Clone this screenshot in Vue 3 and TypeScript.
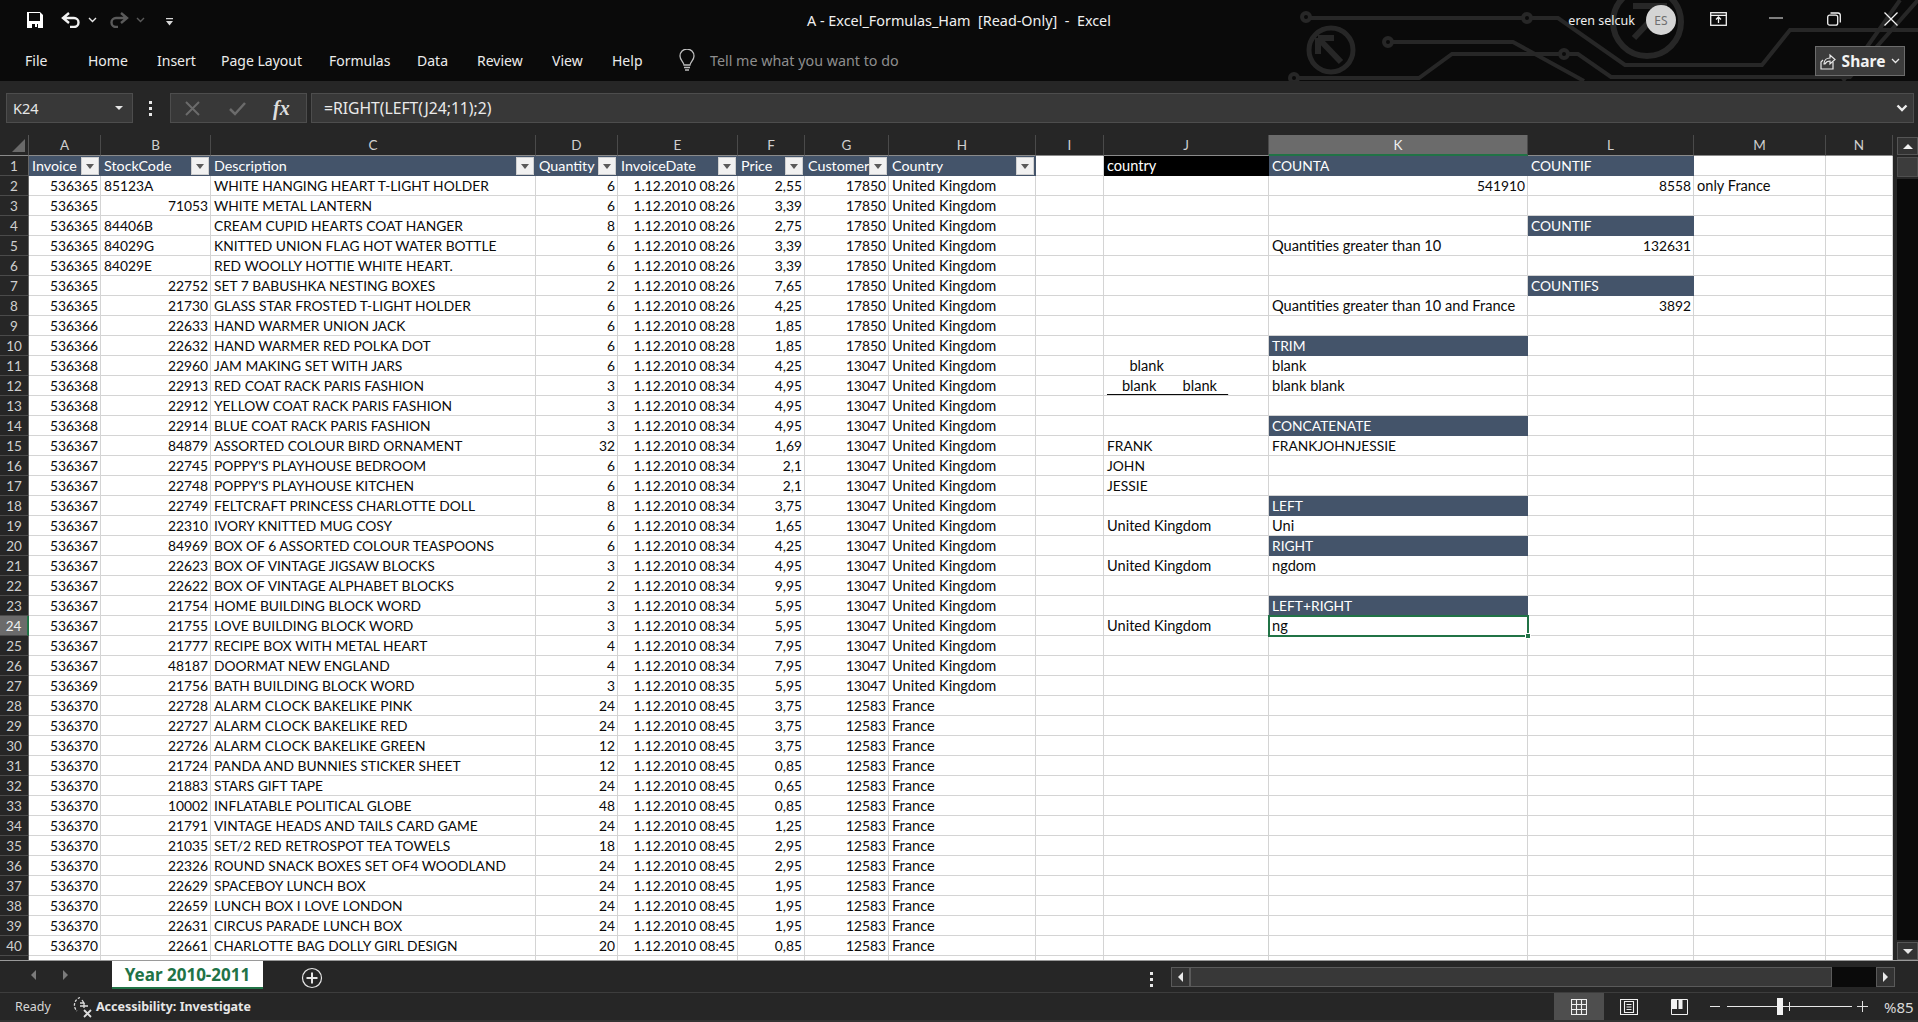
<script setup lang="ts">
interface SideCell {
  t: string
  c?: string
}

const columns = [
  { id: 'A', w: 72 },
  { id: 'B', w: 110 },
  { id: 'C', w: 325 },
  { id: 'D', w: 82 },
  { id: 'E', w: 120 },
  { id: 'F', w: 67 },
  { id: 'G', w: 84 },
  { id: 'H', w: 147 },
  { id: 'I', w: 68 },
  { id: 'J', w: 165 },
  { id: 'K', w: 259 },
  { id: 'L', w: 166 },
  { id: 'M', w: 132 },
  { id: 'N', w: 67 }
]

const gridTemplate = '29px ' + columns.map((c) => c.w + 'px').join(' ')

const tabs = [
  { t: 'File', w: 63 },
  { t: 'Home', w: 69 },
  { t: 'Insert', w: 64 },
  { t: 'Page Layout', w: 108 },
  { t: 'Formulas', w: 88 },
  { t: 'Data', w: 60 },
  { t: 'Review', w: 75 },
  { t: 'View', w: 60 },
  { t: 'Help', w: 74 }
]

const filterHeads = ['Invoice', 'StockCode', 'Description', 'Quantity', 'InvoiceDate', 'Price', 'CustomerID', 'Country']

// invoice | code | description | qty | time | price | customer | country
const raw = [
  '536365|85123A|WHITE HANGING HEART T-LIGHT HOLDER|6|08:26|2,55|17850|United Kingdom',
  '536365|71053|WHITE METAL LANTERN|6|08:26|3,39|17850|United Kingdom',
  '536365|84406B|CREAM CUPID HEARTS COAT HANGER|8|08:26|2,75|17850|United Kingdom',
  '536365|84029G|KNITTED UNION FLAG HOT WATER BOTTLE|6|08:26|3,39|17850|United Kingdom',
  '536365|84029E|RED WOOLLY HOTTIE WHITE HEART.|6|08:26|3,39|17850|United Kingdom',
  '536365|22752|SET 7 BABUSHKA NESTING BOXES|2|08:26|7,65|17850|United Kingdom',
  '536365|21730|GLASS STAR FROSTED T-LIGHT HOLDER|6|08:26|4,25|17850|United Kingdom',
  '536366|22633|HAND WARMER UNION JACK|6|08:28|1,85|17850|United Kingdom',
  '536366|22632|HAND WARMER RED POLKA DOT|6|08:28|1,85|17850|United Kingdom',
  '536368|22960|JAM MAKING SET WITH JARS|6|08:34|4,25|13047|United Kingdom',
  '536368|22913|RED COAT RACK PARIS FASHION|3|08:34|4,95|13047|United Kingdom',
  '536368|22912|YELLOW COAT RACK PARIS FASHION|3|08:34|4,95|13047|United Kingdom',
  '536368|22914|BLUE COAT RACK PARIS FASHION|3|08:34|4,95|13047|United Kingdom',
  '536367|84879|ASSORTED COLOUR BIRD ORNAMENT|32|08:34|1,69|13047|United Kingdom',
  "536367|22745|POPPY'S PLAYHOUSE BEDROOM|6|08:34|2,1|13047|United Kingdom",
  "536367|22748|POPPY'S PLAYHOUSE KITCHEN|6|08:34|2,1|13047|United Kingdom",
  '536367|22749|FELTCRAFT PRINCESS CHARLOTTE DOLL|8|08:34|3,75|13047|United Kingdom',
  '536367|22310|IVORY KNITTED MUG COSY|6|08:34|1,65|13047|United Kingdom',
  '536367|84969|BOX OF 6 ASSORTED COLOUR TEASPOONS|6|08:34|4,25|13047|United Kingdom',
  '536367|22623|BOX OF VINTAGE JIGSAW BLOCKS|3|08:34|4,95|13047|United Kingdom',
  '536367|22622|BOX OF VINTAGE ALPHABET BLOCKS|2|08:34|9,95|13047|United Kingdom',
  '536367|21754|HOME BUILDING BLOCK WORD|3|08:34|5,95|13047|United Kingdom',
  '536367|21755|LOVE BUILDING BLOCK WORD|3|08:34|5,95|13047|United Kingdom',
  '536367|21777|RECIPE BOX WITH METAL HEART|4|08:34|7,95|13047|United Kingdom',
  '536367|48187|DOORMAT NEW ENGLAND|4|08:34|7,95|13047|United Kingdom',
  '536369|21756|BATH BUILDING BLOCK WORD|3|08:35|5,95|13047|United Kingdom',
  '536370|22728|ALARM CLOCK BAKELIKE PINK|24|08:45|3,75|12583|France',
  '536370|22727|ALARM CLOCK BAKELIKE RED|24|08:45|3,75|12583|France',
  '536370|22726|ALARM CLOCK BAKELIKE GREEN|12|08:45|3,75|12583|France',
  '536370|21724|PANDA AND BUNNIES STICKER SHEET|12|08:45|0,85|12583|France',
  '536370|21883|STARS GIFT TAPE|24|08:45|0,65|12583|France',
  '536370|10002|INFLATABLE POLITICAL GLOBE|48|08:45|0,85|12583|France',
  '536370|21791|VINTAGE HEADS AND TAILS CARD GAME|24|08:45|1,25|12583|France',
  '536370|21035|SET/2 RED RETROSPOT TEA TOWELS|18|08:45|2,95|12583|France',
  '536370|22326|ROUND SNACK BOXES SET OF4 WOODLAND|24|08:45|2,95|12583|France',
  '536370|22629|SPACEBOY LUNCH BOX|24|08:45|1,95|12583|France',
  '536370|22659|LUNCH BOX I LOVE LONDON|24|08:45|1,95|12583|France',
  '536370|22631|CIRCUS PARADE LUNCH BOX|24|08:45|1,95|12583|France',
  '536370|22661|CHARLOTTE BAG DOLLY GIRL DESIGN|20|08:45|0,85|12583|France'
]

const side: Record<string, SideCell> = {
  J1: { t: 'country', c: 'black' },
  K1: { t: 'COUNTA', c: 'head' },
  L1: { t: 'COUNTIF', c: 'head' },
  K2: { t: '541910', c: 'num' },
  L2: { t: '8558', c: 'num' },
  M2: { t: 'only France' },
  L4: { t: 'COUNTIF', c: 'head' },
  K5: { t: 'Quantities greater than 10' },
  L5: { t: '132631', c: 'num' },
  L7: { t: 'COUNTIFS', c: 'head' },
  K8: { t: 'Quantities greater than 10 and France' },
  L8: { t: '3892', c: 'num' },
  K10: { t: 'TRIM', c: 'head' },
  J11: { t: '      blank', c: 'pre' },
  K11: { t: 'blank' },
  J12: { t: '    blank       blank   ', c: 'pre under' },
  K12: { t: 'blank blank' },
  K14: { t: 'CONCATENATE', c: 'head' },
  J15: { t: 'FRANK' },
  K15: { t: 'FRANKJOHNJESSIE' },
  J16: { t: 'JOHN' },
  J17: { t: 'JESSIE' },
  K18: { t: 'LEFT', c: 'head' },
  J19: { t: 'United Kingdom' },
  K19: { t: 'Uni' },
  K20: { t: 'RIGHT', c: 'head' },
  J21: { t: 'United Kingdom' },
  K21: { t: 'ngdom' },
  K23: { t: 'LEFT+RIGHT', c: 'head' },
  J24: { t: 'United Kingdom' },
  K24: { t: 'ng', c: 'selected' }
}

const dataCols = ['A', 'B', 'C', 'D', 'E', 'F', 'G', 'H']

const cellFor = (col: string, row: number): SideCell => {
  if (side[col + row]) return side[col + row]
  const line = raw[row - 2]
  const i = dataCols.indexOf(col)
  if (!line || i < 0) return { t: '' }
  const parts = line.split('|')
  if (col === 'E') return { t: '1.12.2010 ' + parts[4], c: 'num' }
  const isNum = col === 'A' || col === 'D' || col === 'F' || col === 'G' || (col === 'B' && /^\d+$/.test(parts[1]))
  return { t: parts[i], c: isNum ? 'num' : '' }
}

// Lato runs narrower than Calibri on lower case, so mixed case text gets a larger size
const cellClass = (col: string, row: number) => {
  const cell = cellFor(col, row)
  return [cell.c, /[a-z]/.test(cell.t) ? 'wide' : '']
}

const rowNumbers = Array.from({ length: 40 }, (_, i) => i + 2)
</script>

<template>
  <div class="app">
    <header class="top">
      <svg class="circuit" width="648" height="81" viewBox="1270 0 648 81" fill="none" stroke="#272727" stroke-width="4">
        <circle cx="1306" cy="17" r="4" />
        <path d="M1310 18H1523M1531 18H1558L1625 65H1762L1790 30H1918" />
        <circle cx="1527" cy="18" r="4" />
        <circle cx="1388" cy="42" r="4" />
        <path d="M1392 42H1513L1584 81" />
        <circle cx="1294" cy="78" r="4" />
        <path d="M1298 78H1419L1452 54H1560M1568 54H1578L1611 77H1850L1918 0M1843 81L1900 0" />
        <circle cx="1564" cy="54" r="4" />
        <circle cx="1331" cy="50" r="22" stroke-width="5" />
        <path d="M1318 38H1334M1318 38V54M1318 38L1341 62" stroke-width="6" />
        <circle cx="1647" cy="22" r="34" stroke-width="6" />
        <path d="M1633 6H1664V34M1664 6L1634 38" stroke-width="6" />
      </svg>

      <div class="title-bar">
        <div class="qat">
          <svg class="save" width="16" height="16" viewBox="0 0 16 16">
            <path d="M0 0H13L16 3V16H0Z" fill="#fff" />
            <path d="M2 1H13V9H2Z" fill="#0a0a0a" />
            <path d="M5 12H11V16H5Z" fill="#0a0a0a" />
            <path d="M8 12H10V15H8Z" fill="#fff" />
          </svg>
          <svg class="undo" width="20" height="16" viewBox="0 0 20 16" fill="none" stroke="#f2f2f2" stroke-width="2.4">
            <path d="M8 1L2 6L8 11M2 6H13A4.5 4.5 0 0 1 13 15H9" />
          </svg>
          <svg class="chev" width="9" height="6" viewBox="0 0 9 6" fill="none" stroke="#e6e6e6" stroke-width="1.4"><path d="M1 1L4.500 4.500L8 1" /></svg>
          <svg class="redo" width="20" height="16" viewBox="0 0 20 16" fill="none" stroke="#5a5a5a" stroke-width="2.4">
            <path d="M12 1L18 6L12 11M18 6H7A4.500 4.500 0 0 0 7 15H9" />
          </svg>
          <svg class="chev dim" width="9" height="6" viewBox="0 0 9 6" fill="none" stroke="#5a5a5a" stroke-width="1.4"><path d="M1 1L4.500 4.500L8 1" /></svg>
          <svg class="custom" width="7" height="8" viewBox="0 0 7 8"><path d="M0 0H7V1.200H0ZM0 3H7L3.500 7.500Z" fill="#d8d8d8" /></svg>
        </div>
        <div class="doc-title">A - Excel_Formulas_Ham&nbsp; [Read-Only]&nbsp; -&nbsp; Excel</div>
        <div class="win-side">
          <span class="user">eren selcuk</span>
          <span class="avatar">ES</span>
          <svg class="win-ribbon" width="17" height="14" viewBox="0 0 17 14" fill="none" stroke="#f2f2f2" stroke-width="1.300">
            <rect x="0.700" y="0.700" width="15.600" height="12.600" />
            <path d="M0.700 3.300H16.300M8.500 11V5.500M6 7.500L8.500 5L11 7.500" />
          </svg>
          <svg class="win-min" width="14" height="2" viewBox="0 0 14 2"><path d="M0 0.500H14V1.500H0Z" fill="#f2f2f2" /></svg>
          <svg class="win-max" width="14" height="14" viewBox="0 0 14 14" fill="none" stroke="#f2f2f2" stroke-width="1.300">
            <rect x="0.700" y="3.200" width="10" height="10" rx="2" />
            <path d="M3.500 1H11A2.500 2.500 0 0 1 13.300 3.500V10.500" />
          </svg>
          <svg class="win-close" width="14" height="14" viewBox="0 0 14 14" stroke="#f2f2f2" stroke-width="1.300"><path d="M0.500 0.500L13.500 13.500M13.500 0.500L0.500 13.500" /></svg>
        </div>
      </div>

      <div class="menu-bar">
        <nav class="tabs">
          <span v-for="tab in tabs" :key="tab.t" class="tab" :style="{ width: tab.w + 'px' }">{{ tab.t }}</span>
        </nav>
        <svg class="bulb" width="16" height="23" viewBox="0 0 16 23" fill="none" stroke="#bdbdbd" stroke-width="1.300">
          <path d="M5 16C4.500 12.500 1 11 1 7A7 7 0 0 1 15 7C15 11 11.500 12.500 11 16Z" />
          <path d="M5 18.500H11M6 21H10" />
        </svg>
        <span class="tell">Tell me what you want to do</span>
        <button class="share">
          <svg width="16" height="18" viewBox="0 0 16 18" fill="none" stroke="#e8e8e8" stroke-width="1.200">
            <path d="M3 8L1 10V17H13V10" />
            <path d="M4 12C4 8 7 6 10 6V3L15 7.500L10 12V9C8 9 6 10 5 12Z" />
          </svg>
          <span>Share</span>
          <svg width="9" height="6" viewBox="0 0 9 6" fill="none" stroke="#e8e8e8" stroke-width="1.300"><path d="M1 1L4.500 4.500L8 1" /></svg>
        </button>
      </div>
    </header>

    <section class="formula-row">
      <div class="name-box">
        <span>K24</span>
        <i class="tri-down"></i>
      </div>
      <div class="vdots"><i></i><i></i><i></i></div>
      <div class="fx-buttons">
        <svg width="15" height="15" viewBox="0 0 15 15" stroke="#6b6b6b" stroke-width="2" fill="none"><path d="M1 1L14 14M14 1L1 14" /></svg>
        <svg width="17" height="15" viewBox="0 0 17 15" stroke="#6b6b6b" stroke-width="2.500" fill="none"><path d="M1 8L6 13L16 2" /></svg>
        <span class="fx">fx</span>
      </div>
      <div class="formula-input">
        <span>=RIGHT(LEFT(J24;11);2)</span>
        <svg width="12" height="8" viewBox="0 0 12 8" fill="none" stroke="#ededed" stroke-width="2.400"><path d="M1.500 1.500L6 6L10.500 1.500" /></svg>
      </div>
    </section>

    <section class="sheet-row">
      <div class="grid" :style="{ gridTemplateColumns: gridTemplate }">
        <div class="corner"><i></i></div>
        <div v-for="col in columns" :key="col.id" class="col-head" :class="{ active: col.id === 'K' }">{{ col.id }}</div>

        <div class="row-head">1</div>
        <template v-for="col in columns" :key="col.id + '1'">
          <div v-if="dataCols.includes(col.id)" class="cell head filter">
            <span class="clip">{{ filterHeads[dataCols.indexOf(col.id)] }}</span>
            <i class="filter-btn"></i>
          </div>
          <div v-else class="cell" :class="cellClass(col.id, 1)">{{ cellFor(col.id, 1).t }}</div>
        </template>

        <template v-for="row in rowNumbers" :key="row">
          <div class="row-head" :class="{ active: row === 24 }">{{ row }}</div>
          <div
            v-for="col in columns"
            :key="col.id + row"
            class="cell"
            :class="cellClass(col.id, row)"
          >{{ cellFor(col.id, row).t }}</div>
        </template>
      </div>

      <aside class="v-scroll">
        <button class="sb-btn"><i class="tri-up"></i></button>
        <div class="v-thumb"></div>
        <div class="v-track"></div>
        <button class="sb-btn"><i class="tri-down big"></i></button>
      </aside>
    </section>

    <section class="sheet-tabs">
      <div class="nav-arrows">
        <i class="tri-left"></i>
        <i class="tri-right"></i>
      </div>
      <div class="sheet-tab">Year 2010-2011</div>
      <svg class="add" width="22" height="22" viewBox="0 0 22 22" fill="none" stroke="#e6e6e6">
        <circle cx="11" cy="11" r="9.500" stroke-width="1.200" />
        <path d="M11 5.500V16.500M5.500 11H16.500" stroke-width="2" />
      </svg>
      <div class="sheet-dots"><i></i><i></i><i></i></div>
      <div class="h-scroll">
        <button class="hs-btn"><i class="tri-left lit"></i></button>
        <div class="h-thumb"></div>
        <div class="h-track"></div>
        <button class="hs-btn"><i class="tri-right lit"></i></button>
      </div>
    </section>

    <footer class="status">
      <span class="ready">Ready</span>
      <svg class="acc" width="20" height="22" viewBox="0 0 20 22" fill="none" stroke="#dcdcdc" stroke-width="1.300">
        <path d="M7 1.500A8 8 0 0 0 4 15" stroke-dasharray="2.500 1.500" />
        <path d="M9 4L11 7H7M11 7V12M7 10H15" />
        <path d="M11 14L18 21M18 14L11 21" stroke-width="1.800" />
      </svg>
      <span class="acc-text">Accessibility: Investigate</span>
      <div class="views">
        <button class="view on">
          <svg width="16" height="16" viewBox="0 0 16 16" fill="none" stroke="#f0f0f0" stroke-width="1.100">
            <path d="M0.500 0.500H15.500V15.500H0.500ZM5.500 0.500V15.500M10.500 0.500V15.500M0.500 5.500H15.500M0.500 10.500H15.500" />
          </svg>
        </button>
        <button class="view">
          <svg width="18" height="16" viewBox="0 0 18 16" fill="none" stroke="#f0f0f0" stroke-width="1.100">
            <path d="M0.500 0.500H17.500V15.500H0.500Z" />
            <path d="M4.500 2.500H13.500V13.500H4.500ZM6.500 5.500H11.500M6.500 8H11.500M6.500 10.500H11.500" />
          </svg>
        </button>
        <button class="view">
          <svg width="17" height="16" viewBox="0 0 17 16">
            <path d="M0.500 0.500H16.500V15.500H0.500Z" fill="none" stroke="#f0f0f0" />
            <path d="M1 1H6V10H1ZM7.500 1H11.500V10H7.500Z" fill="#f0f0f0" />
          </svg>
        </button>
      </div>
      <div class="zoom-ctl">
        <i class="z-minus"></i>
        <div class="slider">
          <i class="thumb"></i>
          <i class="mid"></i>
        </div>
        <svg width="11" height="11" viewBox="0 0 11 11" stroke="#e0e0e0" stroke-width="1"><path d="M5.500 0V11M0 5.500H11" /></svg>
        <span class="pct">%85</span>
      </div>
    </footer>
  </div>
</template>

<style>
html,
body {
  margin: 0;
  background: #0a0a0a;
}
</style>

<style scoped>
.app {
  width: 1918px;
  height: 1022px;
  display: flex;
  flex-direction: column;
  overflow: hidden;
  background: #262626;
  font-family: 'Noto Sans', sans-serif;
  color: #f0f0f0;
}

button {
  font: inherit;
  color: inherit;
  border: none;
  padding: 0;
  background: none;
}

/* title area */
.top {
  position: relative;
  height: 81px;
  flex: none;
  background: #0a0a0a;
}

.circuit {
  position: absolute;
  top: 0;
  right: 0;
}

.title-bar {
  position: relative;
  height: 40px;
  display: grid;
  grid-template-columns: 1fr auto 1fr;
  align-items: center;
}

.qat {
  display: flex;
  align-items: center;
  padding-left: 27px;
}

.undo {
  margin-left: 18px;
}

.qat .chev {
  margin-left: 7px;
}

.redo {
  margin-left: 12px;
}

.custom {
  margin-left: 21px;
  margin-top: 3px;
}

.doc-title {
  font-size: 14.4px;
  color: #f0f0f0;
  white-space: nowrap;
}

.win-side {
  display: flex;
  align-items: center;
  justify-content: flex-end;
}

.user {
  font-size: 12.5px;
  margin-right: 11px;
  color: #eee;
}

.avatar {
  width: 30px;
  height: 30px;
  border-radius: 50%;
  background: #d4d4d4;
  color: #6f6f6f;
  font-size: 12px;
  display: flex;
  align-items: center;
  justify-content: center;
}

.win-ribbon {
  margin-left: 34px;
  margin-top: -3px;
}

.win-min {
  margin-left: 42px;
  margin-top: -4px;
}

.win-max {
  margin-left: 44px;
  margin-top: -3px;
}

.win-close {
  margin-left: 43px;
  margin-right: 20px;
  margin-top: -3px;
}

.menu-bar {
  position: relative;
  height: 41px;
  display: flex;
  align-items: center;
}

.tabs {
  display: flex;
  padding-left: 25px;
}

.tab {
  font-size: 14px;
  color: #ececec;
  white-space: nowrap;
}

.bulb {
  margin-left: -7px;
}

.tell {
  margin-left: 15px;
  font-size: 14.3px;
  color: #8e8e8e;
  white-space: nowrap;
}

.share {
  margin-left: auto;
  margin-right: 13px;
  width: 90px;
  height: 30px;
  box-sizing: border-box;
  background: #3c3c3c;
  border: 1px solid #6c6c6c;
  display: flex;
  align-items: center;
  justify-content: center;
  gap: 6px;
  font-size: 15.5px;
  font-weight: 700;
  color: #f2f2f2;
}

/* formula bar */
.formula-row {
  height: 54px;
  flex: none;
  display: flex;
  align-items: center;
  padding: 0 4px 0 6px;
  box-sizing: border-box;
  background: #262626;
}

.name-box {
  width: 127px;
  height: 30px;
  box-sizing: border-box;
  display: flex;
  align-items: center;
  justify-content: space-between;
  padding: 0 9px 0 6px;
  background: #383838;
  border: 1px solid #4d4d4d;
  font-size: 14.5px;
  color: #e6e6e6;
}

.tri-down {
  display: block;
  width: 0;
  height: 0;
  border-left: 4px solid transparent;
  border-right: 4px solid transparent;
  border-top: 4px solid #e6e6e6;
}

.tri-down.big {
  border-left-width: 5px;
  border-right-width: 5px;
  border-top-width: 5px;
}

.vdots,
.sheet-dots {
  display: flex;
  flex-direction: column;
  gap: 3px;
}

.vdots {
  margin-left: 16px;
}

.vdots i,
.sheet-dots i {
  width: 3px;
  height: 3px;
  background: #e8e8e8;
}

.fx-buttons {
  margin-left: 18px;
  width: 137px;
  height: 30px;
  box-sizing: border-box;
  display: flex;
  align-items: center;
  padding-left: 14px;
  gap: 29px;
  background: #383838;
  border: 1px solid #4d4d4d;
}

.fx {
  font-family: 'Liberation Serif', serif;
  font-style: italic;
  font-weight: 700;
  font-size: 20px;
  color: #dedede;
  margin-left: -2px;
}

.formula-input {
  margin-left: 4px;
  flex: 1;
  height: 30px;
  box-sizing: border-box;
  display: flex;
  align-items: center;
  justify-content: space-between;
  padding: 0 5px 0 12px;
  background: #383838;
  border: 1px solid #4d4d4d;
  font-size: 15.7px;
  color: #eaeaea;
}

/* sheet */
.sheet-row {
  height: 826px;
  flex: none;
  display: flex;
  border-bottom: 1px solid #9a9a9a;
  box-sizing: border-box;
}

.grid {
  width: 1893px;
  height: 825px;
  overflow: hidden;
  display: grid;
  grid-auto-rows: 20px;
  grid-template-rows: 21px;
  background: #fff;
  font-family: Lato, sans-serif;
  font-size: 13.8px;
  color: #0a0a0a;
}

.corner,
.col-head,
.row-head {
  background: #262626;
  color: #cfcfcf;
  box-sizing: border-box;
  display: flex;
  align-items: center;
  justify-content: center;
}

.corner {
  position: relative;
  border-right: 1px solid #555;
  border-bottom: 1px solid #8a8a8a;
}

.corner i {
  position: absolute;
  right: 3px;
  bottom: 3px;
  width: 0;
  height: 0;
  border-left: 13px solid transparent;
  border-bottom: 13px solid #6a6a6a;
}

.col-head {
  border-right: 1px solid #4a4a4a;
  border-bottom: 1px solid #8a8a8a;
  font-size: 13.5px;
}

.col-head.active {
  background: #6b6b6b;
  color: #efefef;
  border-bottom: 2px solid #217346;
}

.row-head {
  border-right: 1px solid #666;
  border-bottom: 1px solid #4a4a4a;
  font-size: 13.5px;
}

.row-head.active {
  background: #6b6b6b;
  color: #efefef;
  border-right: 2px solid #217346;
}

.cell {
  position: relative;
  box-sizing: border-box;
  min-width: 0;
  line-height: 20px;
  padding: 0 2px 0 3px;
  white-space: nowrap;
  overflow: hidden;
  border-right: 1px solid #d4d4d4;
  border-bottom: 1px solid #d4d4d4;
}

.cell.wide {
  font-size: 14.6px;
}

.cell.num {
  text-align: right;
}

.cell.head {
  background: #44546a;
  color: #fff;
  border-right-color: #44546a;
  border-bottom-color: #44546a;
}

.cell.black {
  background: #000;
  color: #fff;
  border-color: #000;
}

.cell.pre {
  white-space: pre;
}

.cell.under {
  text-decoration: underline;
  text-underline-offset: 3px;
}

.cell.selected {
  overflow: visible;
  outline: 2px solid #217346;
  outline-offset: -1px;
  z-index: 2;
}

.cell.selected::after {
  content: '';
  position: absolute;
  right: -4px;
  bottom: -4px;
  width: 6px;
  height: 6px;
  background: #217346;
  border: 1px solid #fff;
  box-sizing: border-box;
}

.cell.filter {
  display: flex;
  align-items: center;
  padding-right: 1px;
  font-size: 14.3px;
}

.clip {
  flex: 1;
  min-width: 0;
  overflow: hidden;
}

.filter-btn {
  flex: none;
  position: relative;
  width: 18px;
  height: 18px;
  box-sizing: border-box;
  background: #f1f1f1;
  border: 1px solid #cfcfcf;
}

.filter-btn::after {
  content: '';
  position: absolute;
  left: 4px;
  top: 6px;
  border-left: 4px solid transparent;
  border-right: 4px solid transparent;
  border-top: 5px solid #5a5a5a;
}

.v-scroll {
  flex: 1;
  display: flex;
  flex-direction: column;
  gap: 2px;
  padding: 2px 0 0 4px;
  box-sizing: border-box;
  background: #262626;
}

.sb-btn {
  flex: none;
  height: 18px;
  box-sizing: border-box;
  background: #333;
  border: 1px solid #555;
  display: flex;
  align-items: center;
  justify-content: center;
}

.tri-up {
  display: block;
  border-left: 5px solid transparent;
  border-right: 5px solid transparent;
  border-bottom: 5px solid #f0f0f0;
}

.v-thumb {
  flex: none;
  height: 20px;
  background: #3c3c3c;
  border: 1px solid #4f4f4f;
  box-sizing: border-box;
}

.v-track {
  flex: 1;
  background: #0a0a0a;
}

/* sheet tabs */
.sheet-tabs {
  height: 32px;
  flex: none;
  display: flex;
  box-sizing: border-box;
  border-bottom: 1px solid #3d3d3d;
  background: #262626;
}

.nav-arrows {
  width: 112px;
  box-sizing: border-box;
  padding: 0 0 4px 31px;
  display: flex;
  align-items: center;
  gap: 27px;
}

.tri-left {
  display: block;
  border-top: 5px solid transparent;
  border-bottom: 5px solid transparent;
  border-right: 5px solid #7b7b7b;
}

.tri-right {
  display: block;
  border-top: 5px solid transparent;
  border-bottom: 5px solid transparent;
  border-left: 5px solid #7b7b7b;
}

.tri-left.lit {
  border-right-color: #eaeaea;
}

.tri-right.lit {
  border-left-color: #eaeaea;
}

.sheet-tab {
  width: 151px;
  height: 28px;
  box-sizing: border-box;
  background: #fff;
  border-bottom: 2px solid #217346;
  color: #217346;
  font-weight: 700;
  font-size: 17px;
  display: flex;
  align-items: center;
  justify-content: center;
  font-family: 'Noto Sans', sans-serif;
}

.add {
  margin: 6px 0 0 38px;
}

.sheet-dots {
  margin: 11px 0 0 827px;
}

.h-scroll {
  margin: 6px 0 0 18px;
  width: 724px;
  height: 20px;
  display: flex;
}

.hs-btn {
  flex: none;
  width: 19px;
  height: 20px;
  box-sizing: border-box;
  display: flex;
  align-items: center;
  justify-content: center;
  background: #333;
  border: 1px solid #5a5a5a;
}

.h-thumb {
  flex: none;
  width: 642px;
  height: 20px;
  box-sizing: border-box;
  background: #383838;
  border: 1px solid #5a5a5a;
}

.h-track {
  flex: 1;
  background: #0a0a0a;
}

/* status bar */
.status {
  flex: 1;
  display: flex;
  align-items: center;
  background: #262626;
  box-sizing: border-box;
  border-bottom: 2px solid #333;
  font-size: 12.5px;
}

.ready {
  margin-left: 15px;
  color: #d6d6d6;
}

.acc {
  margin-left: 22px;
}

.acc-text {
  margin-left: 3px;
  font-weight: 700;
  color: #e6e6e6;
}

.views {
  margin-left: auto;
  display: flex;
  height: 100%;
}

.view {
  width: 50px;
  display: flex;
  align-items: center;
  justify-content: center;
}

.view.on {
  background: #4e4e4e;
}

.zoom-ctl {
  display: flex;
  align-items: center;
  margin-left: 2px;
}

.z-minus {
  width: 10px;
  height: 1px;
  background: #e8e8e8;
  margin-left: 4px;
}

.slider {
  position: relative;
  width: 125px;
  height: 1px;
  margin: 0 5px 0 7px;
  background: #e8e8e8;
}

.thumb {
  position: absolute;
  left: 50px;
  top: -8px;
  width: 6px;
  height: 17px;
  background: #f2f2f2;
}

.mid {
  position: absolute;
  left: 62px;
  top: -4px;
  width: 1px;
  height: 9px;
  background: #e8e8e8;
}

.pct {
  margin-left: 16px;
  width: 34px;
  color: #d8d8d8;
  font-size: 15px;
  white-space: nowrap;
}
</style>
